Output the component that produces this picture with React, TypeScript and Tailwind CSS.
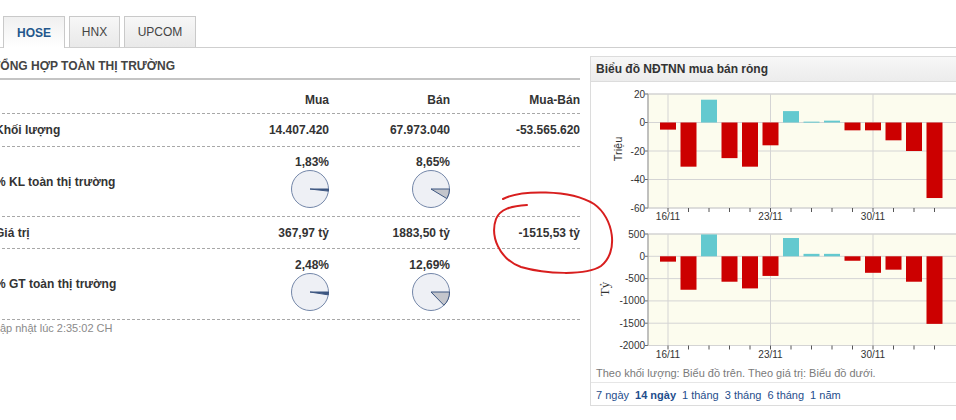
import React from 'react'

const volume = [-5, -31, 16, -25, -31, -16, 8, 0.6, 1.3, -5.5, -5.5, -12.5, -20, -53]
const value = [-120, -750, 490, -570, -720, -440, 410, 55, 55, -100, -370, -300, -570, -1515]

// page offsets of the chart svg (panel inner left, below header)
const OX = 591

function Pie({ pct, dark }: { pct: number; dark?: boolean }) {
  const r = 18.5
  const a = (pct / 100) * Math.PI * 2
  const x = 19 + r * Math.cos(a)
  const y = 19 + r * Math.sin(a)
  return (
    <svg width="38" height="38" viewBox="0 0 38 38">
      <circle cx="19" cy="19" r={r} fill="#eef0f5" stroke="#7386a8" strokeWidth="1" />
      <path
        d={`M19 19 L${19 + r} 19 A${r} ${r} 0 0 1 ${x} ${y} Z`}
        fill={dark ? '#3d5680' : '#c4c6cc'}
        stroke="#3d5680"
        strokeWidth="1"
      />
    </svg>
  )
}

function Plot({
  data,
  top,
  bottom,
  zero,
  k,
  ticks,
  labelY,
  title,
  titleX,
  titleY,
  serif,
}: {
  data: number[]
  top: number
  bottom: number
  zero: number
  k: number
  ticks: number[]
  labelY: number
  title: string
  titleX: number
  titleY: number
  serif?: boolean
}) {
  const left = 648 - OX
  const cx = (i: number) => 668 - OX + i * 20.5
  return (
    <g>
      <rect x={left} y={top} width={380 - left} height={bottom - top} fill="#fcfcee" stroke="#cfcfcf" />
      {ticks.map((t) => {
        const y = zero - t * k
        return (
          <g key={t}>
            <line x1={left} x2={380} y1={y} y2={y} stroke="#d4d4d4" />
            <line x1={left - 3} x2={left} y1={y} y2={y} stroke="#666" />
            <text x={left - 3} y={y + 3.5} fontSize="10" textAnchor="end" fill="#333">
              {t}
            </text>
          </g>
        )
      })}
      {[0, 5, 10].map((i) => (
        <line key={i} x1={cx(i)} x2={cx(i)} y1={top} y2={bottom} stroke="#d4d4d4" />
      ))}
      <line x1={left} x2={left} y1={top} y2={bottom} stroke="#999" />
      {data.map((v, i) => {
        const y = zero - Math.max(v, 0) * k
        const h = Math.max(Math.abs(v) * k, 1)
        return (
          <rect
            key={i}
            x={cx(i) - 8}
            y={y}
            width="16"
            height={h}
            fill={v >= 0 ? '#63c9cf' : '#cc0000'}
          />
        )
      })}
      {data.map((_, i) => (
        <line key={i} x1={cx(i)} x2={cx(i)} y1={bottom} y2={bottom + 4} stroke="#555" />
      ))}
      {[
        ['16/11', 0],
        ['23/11', 5],
        ['30/11', 10],
      ].map(([l, i]) => (
        <text key={l} x={cx(i as number)} y={labelY + 3.5} fontSize="10" textAnchor="middle" fill="#333">
          {l}
        </text>
      ))}
      <text
        x={titleX}
        y={titleY}
        fontSize={serif ? 13 : 11}
        fontFamily={serif ? '"Liberation Serif", serif' : undefined}
        textAnchor="middle"
        dominantBaseline="middle"
        fill="#333"
        transform={`rotate(-90 ${titleX} ${titleY})`}
      >
        {title}
      </text>
    </g>
  )
}

function Row({
  label,
  mua,
  ban,
  diff,
  h,
}: {
  label: string
  mua: React.ReactNode
  ban: React.ReactNode
  diff?: string
  h: string
}) {
  return (
    <div className={`flex ${h} items-center border-b border-dashed border-[#a8a8a8]`}>
      <div className="flex-1 pl-[3px]">{label}</div>
      <div className="w-[129px] text-right">{mua}</div>
      <div className="w-[121px] text-right">{ban}</div>
      <div className="w-[130px] text-right">{diff}</div>
    </div>
  )
}

function PieCell({ pct, text, dark }: { pct: number; text: string; dark?: boolean }) {
  return (
    <div className="flex flex-col items-end">
      <span className="leading-[14px]">{text}</span>
      <div className="mt-px">
        <Pie pct={pct} dark={dark} />
      </div>
    </div>
  )
}

export default function App() {
  const tabBase = 'flex h-[31px] items-center justify-center border border-b-0 border-[#c9c9c9] text-[12px]'
  return (
    <div className="relative h-[420px] w-[956px] overflow-hidden bg-white font-['Liberation_Sans',Arial,sans-serif] text-[#333]">
      {/* Tabs */}
      <div className="flex items-end gap-[4px] border-b border-[#cfcfcf] pl-[3px] pt-[16px]">
        <div className={`${tabBase} -mb-px h-[32px] w-[62px] bg-gradient-to-b from-[#f0f0f0] to-white font-bold text-[#23578c]`}>
          HOSE
        </div>
        <div className={`${tabBase} w-[51px] bg-gradient-to-b from-[#f7f7f7] to-[#e9e9e9] text-[#444]`}>HNX</div>
        <div className={`${tabBase} w-[72px] bg-gradient-to-b from-[#f7f7f7] to-[#e9e9e9] text-[#444]`}>UPCOM</div>
      </div>

      <div className="flex items-start">
        {/* Left: summary table */}
        <div className="ml-[-8px] w-[588px] shrink-0 text-[12px] font-bold leading-[14px]">
          <div className="flex h-[30px] items-end pb-[5px] pl-[1px] text-[#444]">TỔNG HỢP TOÀN THỊ TRƯỜNG</div>
          <div className="h-[2px] bg-[#c4c4c4]" />
          <div className="flex h-[34px] items-end border-b border-dashed border-[#a8a8a8] pb-[6px]">
            <div className="flex-1" />
            <div className="w-[129px] text-right">Mua</div>
            <div className="w-[121px] text-right">Bán</div>
            <div className="w-[130px] text-right">Mua-Bán</div>
          </div>
          <Row h="h-[33px]" label="Khối lượng" mua="14.407.420" ban="67.973.040" diff="-53.565.620" />
          <Row
            h="h-[70px]"
            label="% KL toàn thị trường"
            mua={<PieCell pct={1.83} text="1,83%" dark />}
            ban={<PieCell pct={8.65} text="8,65%" />}
          />
          <Row h="h-[32px]" label="Giá trị" mua="367,97 tỷ" ban="1883,50 tỷ" diff="-1515,53 tỷ" />
          <Row
            h="h-[71px]"
            label="% GT toàn thị trường"
            mua={<PieCell pct={2.48} text="2,48%" dark />}
            ban={<PieCell pct={12.69} text="12,69%" />}
          />
          <div className="mt-px text-[11px] font-normal text-[#8a8a8a]">Cập nhật lúc 2:35:02 CH</div>
        </div>

        {/* Right: chart panel */}
        <div className="ml-[10px] mt-[8px] w-[380px] shrink-0 border border-[#dcdcdc]">
          <div className="flex h-[25px] items-center border-b border-[#dcdcdc] bg-gradient-to-b from-[#f7f7f7] to-[#ececec] pl-[5px] text-[12px] font-bold">
            Biểu đồ NĐTNN mua bán rỏng
          </div>
          <svg width="380" height="282" className="block font-['Liberation_Sans',Arial,sans-serif]">
            <Plot
              data={volume}
              top={12}
              bottom={126}
              zero={40.5}
              k={1.425}
              ticks={[20, 0, -20, -40, -60]}
              labelY={134}
              title="Triệu"
              titleX={28}
              titleY={67}
            />
            <Plot
              data={value}
              top={152}
              bottom={263.5}
              zero={174.3}
              k={0.0446}
              ticks={[500, 0, -500, -1000, -1500, -2000]}
              labelY={272}
              title="Tỷ"
              titleX={15}
              titleY={207}
              serif
            />
          </svg>
          <div className="border-b border-[#e6e6e6] pb-[2px] pl-[5px] pt-[2px] text-[11px] leading-[14px] text-[#7a7a7a]">
            Theo khối lượng: Biểu đồ trên. Theo giá trị: Biểu đồ dưới.
          </div>
          <div className="flex gap-[6px] pb-[3px] pl-[5px] pt-[5px] text-[11px] leading-[14px] text-[#1f4e8c]">
            <span>7 ngày</span>
            <span className="font-bold">14 ngày</span>
            <span>1 tháng</span>
            <span>3 tháng</span>
            <span>6 tháng</span>
            <span>1 năm</span>
          </div>
        </div>
      </div>

      {/* Hand-drawn annotation */}
      <svg className="pointer-events-none absolute left-0 top-0" width="956" height="420">
        <path
          d="M503 199 C520 190, 570 189, 594 204 C614 218, 619 252, 601 266 C586 276, 545 274, 521 267 C499 259, 490 236, 496 219 C500 209, 511 206, 527 205"
          fill="none"
          stroke="#d81e1e"
          strokeWidth="2"
          strokeLinecap="round"
        />
      </svg>
    </div>
  )
}
